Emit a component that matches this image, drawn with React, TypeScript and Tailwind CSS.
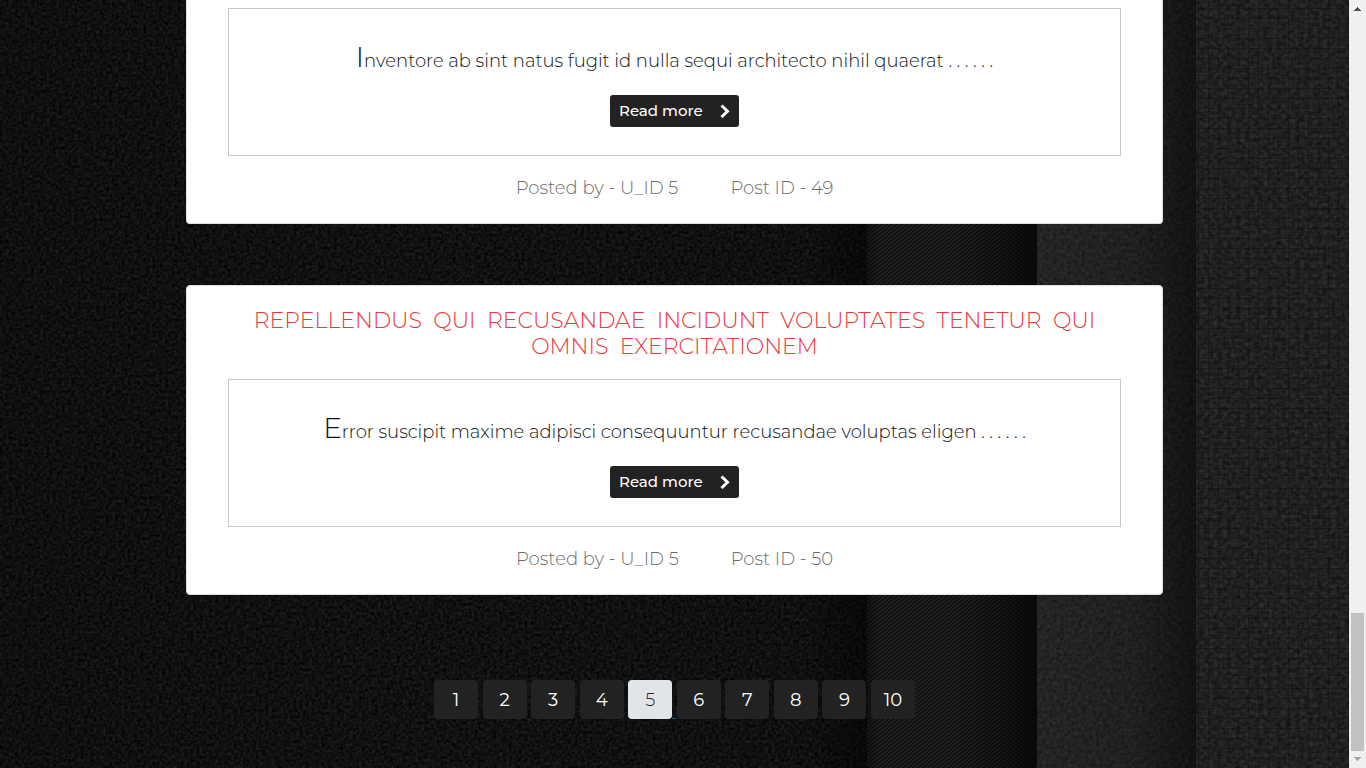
import React from 'react';

type Post = { id: number; author: number; title?: string; excerpt: string };

const posts: Post[] = [
  { id: 49, author: 5, excerpt: 'Inventore ab sint natus fugit id nulla sequi architecto nihil quaerat . . . . . .' },
  {
    id: 50,
    author: 5,
    title: 'Repellendus qui recusandae incidunt voluptates tenetur qui omnis exercitationem',
    excerpt: 'Error suscipit maxime adipisci consequuntur recusandae voluptas eligen . . . . . .',
  },
];

const pages = [1, 2, 3, 4, 5, 6, 7, 8, 9, 10];
const currentPage = 5;

function FabricBackdrop() {
  return (
    <svg
      aria-hidden="true"
      className="absolute inset-0 h-full w-full"
      viewBox="0 0 1349 768"
      preserveAspectRatio="xMidYMid slice"
    >
      <defs>
        <filter id="felt" x="0" y="0" width="100%" height="100%" colorInterpolationFilters="sRGB">
          <feTurbulence type="fractalNoise" baseFrequency="0.32" numOctaves="3" seed="4" />
          <feColorMatrix values="0.17 0 0 0 -0.02  0.17 0 0 0 -0.02  0.17 0 0 0 -0.02  0 0 0 0 1" />
        </filter>
        <filter id="wool" x="0" y="0" width="100%" height="100%" colorInterpolationFilters="sRGB">
          <feTurbulence type="fractalNoise" baseFrequency="0.28" numOctaves="3" seed="9" />
          <feColorMatrix values="0.13 0 0 0 0.075  0.13 0 0 0 0.075  0.13 0 0 0 0.075  0 0 0 0 1" />
        </filter>
        <filter id="linen" x="0" y="0" width="100%" height="100%" colorInterpolationFilters="sRGB">
          <feTurbulence type="fractalNoise" baseFrequency="0.22 0.26" numOctaves="3" seed="14" />
          <feColorMatrix values="0.16 0 0 0 0.05  0.16 0 0 0 0.05  0.16 0 0 0 0.05  0 0 0 0 1" />
        </filter>
        <pattern id="twill" width="5" height="4" patternUnits="userSpaceOnUse">
          <path d="M-1.25 5 L6.25 -1 M-1.25 1 L1.25 -1 M3.75 5 L6.25 3" stroke="#262626" strokeWidth="1.2" />
        </pattern>
        <pattern id="weave" width="10" height="10" patternUnits="userSpaceOnUse">
          <path d="M0 8.5H10 M8.5 0V10" stroke="#0c0c0c" strokeWidth="1" strokeOpacity="0.35" />
        </pattern>
        <linearGradient id="leftShade">
          <stop offset="0" stopColor="#000" stopOpacity="0.1" />
          <stop offset="0.5" stopColor="#000" stopOpacity="0" />
          <stop offset="0.93" stopColor="#000" stopOpacity="0.05" />
          <stop offset="1" stopColor="#000" stopOpacity="0.5" />
        </linearGradient>
        <linearGradient id="twillShade">
          <stop offset="0" stopColor="#000" stopOpacity="0.3" />
          <stop offset="0.08" stopColor="#000" stopOpacity="0.03" />
          <stop offset="0.6" stopColor="#000" stopOpacity="0.08" />
          <stop offset="1" stopColor="#000" stopOpacity="0.65" />
        </linearGradient>
        <linearGradient id="foldShade">
          <stop offset="0" stopColor="#000" stopOpacity="0" />
          <stop offset="0.6" stopColor="#000" stopOpacity="0.1" />
          <stop offset="1" stopColor="#000" stopOpacity="0.5" />
        </linearGradient>
      </defs>
      <rect width="867" height="768" filter="url(#felt)" />
      <rect width="867" height="768" fill="url(#leftShade)" />
      <rect x="867" width="170" height="768" fill="#101010" />
      <rect x="867" width="170" height="768" fill="url(#twill)" />
      <rect x="867" width="170" height="768" fill="url(#twillShade)" />
      <rect x="1037" width="159" height="768" filter="url(#wool)" />
      <rect x="1037" width="159" height="768" fill="url(#foldShade)" />
      <rect x="1196" width="153" height="768" filter="url(#linen)" />
      <rect x="1196" width="153" height="768" fill="url(#weave)" />
    </svg>
  );
}

function PostCard({ post }: { post: Post }) {
  return (
    <article
      className={`border border-[#dfdfdf] bg-white px-[41px] pb-[22px] text-center ${
        post.title ? 'rounded pt-[22px]' : 'rounded-b border-t-0 pt-2'
      }`}
    >
      {post.title && (
        <h2 className="mb-[19px] whitespace-pre-wrap text-[22px] leading-[26px] font-light text-[#ea383c] uppercase">
          {post.title.split(' ').join('  ')}
        </h2>
      )}
      <div className="border border-[#c8c8c8] py-7">
        <p className="mb-[10px] text-[18px] leading-[48px] font-light text-[#0c0f12] first-letter:text-[28px] first-letter:leading-none">
          {post.excerpt}
        </p>
        <button
          type="button"
          className="mx-auto flex h-8 w-[129px] items-center justify-between rounded-[3px] bg-[#222] px-[9px] text-[15px] leading-6 font-medium text-white"
        >
          Read more
          <svg aria-hidden="true" className="h-[14px] w-[10px]" viewBox="0 0 10 14" fill="none">
            <path d="M1.5 1.5 L7.5 7.25 L1.5 13" stroke="white" strokeWidth="3" />
          </svg>
        </button>
      </div>
      <footer className="mt-[19px] flex justify-center gap-[52px] text-[18px] leading-[26px] font-light text-[#6c6c6c]">
        <span>Posted by - U_ID {post.author}</span>
        <span>Post ID - {post.id}</span>
      </footer>
    </article>
  );
}

export default function App() {
  return (
    <div className="flex min-h-screen bg-[#101010] font-['Montserrat','Inter',sans-serif]">
      <div className="relative min-w-0 flex-1 overflow-hidden">
        <FabricBackdrop />
        <main className="relative mx-auto w-full max-w-[977px]">
          <div className="flex flex-col gap-[61px]">
            {posts.map((post) => (
              <PostCard key={post.id} post={post} />
            ))}
          </div>
          <nav aria-label="Pages" className="mx-auto mt-[85px] flex max-w-[481px] justify-between pb-[49px]">
            {pages.map((page) => (
              <a
                key={page}
                href={`?page=${page}`}
                aria-current={page === currentPage ? 'page' : undefined}
                className={`relative flex h-[39px] w-11 items-center justify-center rounded pt-px text-[18px] ${
                  page === currentPage ? 'bg-[#e1e5ea] font-light text-[#212529]' : 'bg-[#222] font-normal text-white'
                }`}
              >
                {page}
                {page === currentPage && <span className="absolute bottom-0 left-full h-px w-[5px] bg-[#0056b3]" />}
              </a>
            ))}
          </nav>
        </main>
      </div>
      <div aria-hidden="true" className="flex w-[17px] flex-col items-center justify-between bg-[#f0f0f0]">
        <svg className="h-[17px] w-[17px]" viewBox="0 0 17 17" shapeRendering="crispEdges">
          <path d="M8 7h1v1h1v1h1v1h1v1H5v-1h1v-1h1v-1h1z" fill="#505050" />
        </svg>
        <div className="flex flex-col items-center">
          <div className="h-[138px] w-[13px] bg-[#c1c1c1]" />
          <svg className="h-[17px] w-[17px]" viewBox="0 0 17 17" shapeRendering="crispEdges">
            <path d="M5 6h7v1h-1v1h-1v1h-1v1H8V9H7V8H6V7H5z" fill="#a3a3a3" />
          </svg>
        </div>
      </div>
    </div>
  );
}
